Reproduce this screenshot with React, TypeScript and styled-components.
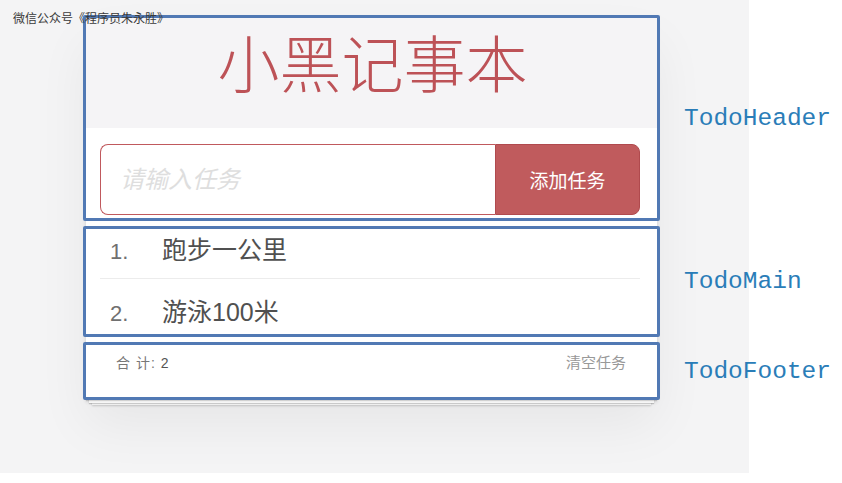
import React from 'react';
import styled, { createGlobalStyle } from 'styled-components';

const GlobalStyle = createGlobalStyle`
  html, body {
    margin: 0;
    padding: 0;
    background: #fff;
  }
  * {
    box-sizing: border-box;
  }
`;

const CJK = `"Liberation Sans", "Noto Sans CJK SC", sans-serif`;

const Page = styled.div`
  position: relative;
  display: flex;
  align-items: flex-start;
  min-height: 483px;
  padding: 18px 0 0 86px;
  background: linear-gradient(#f4f4f5, #f4f4f5) 0 0 / 749px 473px no-repeat, #fff;
  font-family: ${CJK};
`;

const Watermark = styled.div`
  position: absolute;
  top: 12px;
  left: 13px;
  z-index: 3;
  font-size: 12px;
  line-height: 14px;
  color: #3a3a3a;
  white-space: nowrap;
`;

const Card = styled.section`
  position: relative;
  width: 571px;
  background: #fff;
  box-shadow: 0 2px 4px rgba(0, 0, 0, 0.12), 0 25px 50px rgba(0, 0, 0, 0.06);
`;

const TitleBar = styled.header`
  height: 110px;
  display: flex;
  align-items: center;
  justify-content: center;
  padding: 0 0 24px 2px;
  background: #f5f4f6;
`;

const Title = styled.h1`
  margin: 0;
  font-family: "Noto Sans CJK SC", sans-serif;
  font-weight: 300;
  font-size: 62px;
  line-height: 62px;
  color: #bd5257;
`;

const InputBar = styled.div`
  padding: 16px 0 2px;
  background: #fff;
`;

const InputRow = styled.div`
  display: flex;
  width: 540px;
  height: 71px;
  margin: 0 0 0 14px;
`;

const TaskInput = styled.input`
  flex: 1;
  min-width: 0;
  height: 100%;
  padding: 0 0 0 19px;
  border: 1px solid #c0595d;
  border-right: none;
  border-radius: 8px 0 0 8px;
  outline: none;
  font-family: ${CJK};
  font-size: 24px;
  color: #444;
  background: #fff;

  &::placeholder {
    color: #dedede;
    font-style: italic;
  }
`;

const AddButton = styled.button`
  width: 145px;
  height: 100%;
  border: 1px solid #b04a4e;
  border-radius: 0 8px 8px 0;
  background: #c05b5d;
  color: #fff;
  font-family: ${CJK};
  font-size: 19px;
  cursor: pointer;
`;

const List = styled.ul`
  margin: 0;
  padding: 0 17px 0 14px;
  list-style: none;
`;

const Row = styled.li`
  display: flex;
  align-items: center;
  height: 62px;
  border-bottom: 1px solid #ececec;

  &:last-child {
    border-bottom: none;
    height: 61px;
  }
`;

const Line = styled.span`
  display: flex;
  align-items: baseline;
`;

const Index = styled.span`
  width: 62px;
  padding-left: 10px;
  font-size: 22px;
  color: #707070;
`;

const Text = styled.span`
  font-size: 25px;
  color: #505050;
`;

const Footer = styled.footer`
  display: flex;
  justify-content: space-between;
  align-items: flex-start;
  height: 60px;
  padding: 14px 31px 0 30px;
  background: #fff;
  box-shadow: 0 1px 1px rgba(0, 0, 0, 0.15), 0 6px 0 -3px #f6f6f6,
    0 7px 1px -3px rgba(0, 0, 0, 0.18), 0 11px 0 -6px #f6f6f6,
    0 12px 2px -6px rgba(0, 0, 0, 0.18);
`;

const Count = styled.span`
  font-size: 14px;
  line-height: 18px;
  color: #777;
  letter-spacing: 1px;

  b {
    font-weight: normal;
    color: #555;
  }
`;

const Clear = styled.span`
  font-size: 15px;
  line-height: 18px;
  color: #999;
`;

// annotation frames drawn over the app sections
const Frame = styled.div<{ $top: number; $height: number }>`
  position: absolute;
  left: -3px;
  top: ${(p) => p.$top}px;
  width: 577px;
  height: ${(p) => p.$height}px;
  border: 3px solid #5179b4;
  border-radius: 2px;
  pointer-events: none;
  z-index: 2;
`;

const LabelColumn = styled.div`
  display: flex;
  flex-direction: column;
  margin-left: 27px;
`;

const Label = styled.div<{ $gap: number }>`
  margin-top: ${(p) => p.$gap}px;
  font-family: "Liberation Mono", "DejaVu Sans Mono", monospace;
  font-size: 24.5px;
  line-height: 28px;
  color: #2a7db8;
  white-space: nowrap;
`;

const todos = ['跑步一公里', '游泳100米'];

const App: React.FC = () => {
  return (
    <Page>
      <GlobalStyle />
      <Watermark>微信公众号《程序员朱永胜》</Watermark>
      <Card>
        <TitleBar>
          <Title>小黑记事本</Title>
        </TitleBar>
        <InputBar>
          <InputRow>
            <TaskInput placeholder="请输入任务" />
            <AddButton>添加任务</AddButton>
          </InputRow>
        </InputBar>
        <List>
          {todos.map((todo, i) => (
            <Row key={todo}>
              <Line>
                <Index>{i + 1}.</Index>
                <Text>{todo}</Text>
              </Line>
            </Row>
          ))}
        </List>
        <Footer>
          <Count>
            合 计: <b>{todos.length}</b>
          </Count>
          <Clear>清空任务</Clear>
        </Footer>
        <Frame $top={-3} $height={206} />
        <Frame $top={208} $height={111} />
        <Frame $top={324} $height={58} />
      </Card>
      <LabelColumn>
        <Label $gap={87}>TodoHeader</Label>
        <Label $gap={135}>TodoMain</Label>
        <Label $gap={62}>TodoFooter</Label>
      </LabelColumn>
    </Page>
  );
};

export default App;
